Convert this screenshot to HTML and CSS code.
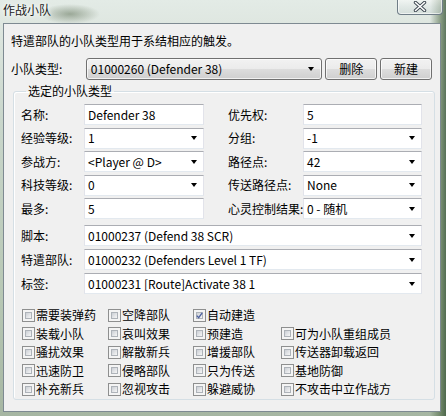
FILE: index.html
```html
<!DOCTYPE html>
<html>
<head>
<meta charset="utf-8">
<link rel="stylesheet" href="styles.css">
</head>
<body>
<div class="window">
  <div class="titlebar">
    <span class="title">作战小队</span>
    <div class="close">
      <svg width="14" height="11" viewBox="0 0 14 11"><path d="M2.5 1.5 L11.5 9.5 M11.5 1.5 L2.5 9.5" stroke="#3d4750" stroke-width="3.4" stroke-linecap="round"/><path d="M2.5 1.5 L11.5 9.5 M11.5 1.5 L2.5 9.5" stroke="#ffffff" stroke-width="1.6" stroke-linecap="round"/></svg>
    </div>
  </div>
  <div class="client">
    <div class="desc">特遣部队的小队类型用于系结相应的触发。</div>
    <div class="toprow">
      <span class="toplbl">小队类型:</span>
      <div class="ddl"><span>01000260 (Defender 38)</span><span class="arrow"></span></div>
      <div class="btn">删除</div>
      <div class="btn">新建</div>
    </div>
    <fieldset class="group">
      <legend>选定的小队类型</legend>
      <div class="fields">
        <span class="lbl">名称:</span>
        <div class="box">Defender 38</div>
        <span class="lbl">优先权:</span>
        <div class="box">5</div>

        <span class="lbl">经验等级:</span>
        <div class="box combo"><span>1</span><span class="arrow"></span></div>
        <span class="lbl">分组:</span>
        <div class="box combo"><span>-1</span><span class="arrow"></span></div>

        <span class="lbl">参战方:</span>
        <div class="box combo"><span>&lt;Player @ D&gt;</span><span class="arrow"></span></div>
        <span class="lbl">路径点:</span>
        <div class="box combo"><span>42</span><span class="arrow"></span></div>

        <span class="lbl">科技等级:</span>
        <div class="box combo"><span>0</span><span class="arrow"></span></div>
        <span class="lbl">传送路径点:</span>
        <div class="box combo"><span>None</span><span class="arrow"></span></div>

        <span class="lbl">最多:</span>
        <div class="box">5</div>
        <span class="lbl">心灵控制结果:</span>
        <div class="box combo"><span>0 - 随机</span><span class="arrow"></span></div>
      </div>
      <div class="wide">
        <span class="lbl">脚本:</span>
        <div class="box combo"><span>01000237 (Defend 38 SCR)</span><span class="arrow"></span></div>
        <span class="lbl">特遣部队:</span>
        <div class="box combo"><span>01000232 (Defenders Level 1 TF)</span><span class="arrow"></span></div>
        <span class="lbl">标签:</span>
        <div class="box combo"><span>01000231 [Route]Activate 38 1</span><span class="arrow"></span></div>
      </div>
      <div class="checks">
        <div class="chk"><span class="cb"></span>需要装弹药</div>
        <div class="chk"><span class="cb"></span>空降部队</div>
        <div class="chk"><span class="cb on"><svg width="9" height="9" viewBox="0 0 9 9"><path d="M1 4.6 L3.4 7.4 L8 1" fill="none" stroke="#4d61a0" stroke-width="1.7"/></svg></span>自动建造</div>
        <div class="chk empty"></div>

        <div class="chk"><span class="cb"></span>装载小队</div>
        <div class="chk"><span class="cb"></span>哀叫效果</div>
        <div class="chk"><span class="cb"></span>预建造</div>
        <div class="chk"><span class="cb"></span>可为小队重组成员</div>

        <div class="chk"><span class="cb"></span>骚扰效果</div>
        <div class="chk"><span class="cb"></span>解散新兵</div>
        <div class="chk"><span class="cb"></span>增援部队</div>
        <div class="chk"><span class="cb"></span>传送器卸载返回</div>

        <div class="chk"><span class="cb"></span>迅速防卫</div>
        <div class="chk"><span class="cb"></span>侵略部队</div>
        <div class="chk"><span class="cb"></span>只为传送</div>
        <div class="chk"><span class="cb"></span>基地防御</div>

        <div class="chk"><span class="cb"></span>补充新兵</div>
        <div class="chk"><span class="cb"></span>忽视攻击</div>
        <div class="chk"><span class="cb"></span>躲避威协</div>
        <div class="chk"><span class="cb"></span>不攻击中立作战方</div>
      </div>
    </fieldset>
  </div>
</div>
</body>
</html>
```

FILE: styles.css
```css
* { box-sizing: border-box; }
html, body { margin: 0; padding: 0; }
body {
  width: 446px;
  height: 416px;
  overflow: hidden;
  font-family: "Noto Sans CJK SC", sans-serif;
  font-size: 12px;
  color: #000;
}
.window {
  width: 446px;
  height: 416px;
  display: flex;
  flex-direction: column;
  background:
    radial-gradient(ellipse 30px 10px at 70px 14px, rgba(70,90,60,0.45), rgba(70,90,60,0) 100%),
    linear-gradient(90deg, rgba(255,255,255,0) 0, rgba(255,255,255,0) 430px, rgba(60,90,50,0.55) 441px, rgba(40,70,40,0.7) 446px),
    linear-gradient(180deg, #e3ebe6 0, #dfe7e1 22px, #c9d6cb 120px, #b7c7b4 300px, #a6b6a2 416px);
}
.titlebar {
  height: 23px;
  display: flex;
  justify-content: space-between;
  align-items: flex-start;
}
.title {
  margin: 2px 0 0 3px;
  line-height: 16px;
  font-size: 12px;
  color: #1b1b1b;
  text-shadow: 0 0 6px #ffffff, 0 0 3px #ffffff;
}
.close {
  width: 46px;
  height: 16px;
  margin-right: 3px;
  margin-top: -1px;
  border: 1px solid #6f7d87;
  border-top: none;
  border-radius: 0 0 4px 4px;
  background: linear-gradient(180deg, rgba(255,255,255,0.55), rgba(225,232,232,0.5) 50%, rgba(200,212,210,0.5));
  box-shadow: inset 0 0 0 1px rgba(255,255,255,0.6);
  display: flex;
  align-items: center;
  justify-content: center;
}
.client {
  margin-left: 3px;
  width: 438px;
  height: 389px;
  border: 1px solid #7e8a92;
  background: #f0f0f0;
  padding: 9px 5px 0 7px;
}
.desc {
  line-height: 16px;
  height: 16px;
}
.toprow {
  margin-top: 9px;
  height: 22px;
  display: flex;
  align-items: center;
  margin-right: 3px;
}
.toplbl {
  width: 75px;
  line-height: 16px;
}
.ddl {
  width: 237px;
  height: 22px;
  border: 1px solid #707070;
  border-radius: 3px;
  background: linear-gradient(180deg, #f2f2f2 0, #ebebeb 50%, #dddddd 50%, #cfcfcf 100%);
  box-shadow: inset 0 0 0 1px rgba(255,255,255,0.7);
  display: flex;
  align-items: center;
  justify-content: space-between;
  padding: 0 7px 0 4px;
  line-height: 16px;
}
.btn {
  margin-left: 3px;
  width: 52px;
  height: 22px;
  border: 1px solid #707070;
  border-radius: 3px;
  background: linear-gradient(180deg, #f2f2f2 0, #ebebeb 50%, #dddddd 50%, #cfcfcf 100%);
  box-shadow: inset 0 0 0 1px rgba(255,255,255,0.7);
  display: flex;
  align-items: center;
  justify-content: center;
  line-height: 16px;
}
.arrow {
  width: 0;
  height: 0;
  border-left: 3.5px solid transparent;
  border-right: 3.5px solid transparent;
  border-top: 4px solid #000;
}
.group {
  margin: 3px 0 0 2px;
  padding: 0 0 4px 7px;
  border: 1px solid #d5dfe5;
  border-radius: 3px;
  box-shadow: inset 1px 1px 0 #fff;
  height: 317px;
}
.group legend {
  margin-left: 5px;
  padding: 0 2px;
  line-height: 16px;
}
.fields {
  margin-top: 5px;
  display: grid;
  grid-template-columns: 63px 132px 87px 119px;
  row-gap: 2.5px;
  grid-auto-rows: 21px;
}
.fields > .lbl:nth-child(4n+3) { margin-left: 12px; }
.fields > .box:nth-child(4n+2) { margin-right: 12px; }
.lbl {
  display: flex;
  align-items: center;
  line-height: 16px;
  white-space: nowrap;
}
.box {
  height: 21px;
  background: #fff;
  border: 1px solid #dbdfe6;
  border-top-color: #abadb3;
  border-left-color: #e2e3ea;
  border-right-color: #e2e3ea;
  border-bottom-color: #e3e9ef;
  display: flex;
  align-items: center;
  padding: 0 6px 0 3px;
  line-height: 16px;
  white-space: nowrap;
}
.combo { justify-content: space-between; }
.wide {
  margin-top: 6px;
  display: grid;
  grid-template-columns: 63px 338px;
  row-gap: 3px;
  grid-auto-rows: 21px;
}
.checks {
  margin-top: 12px;
  margin-left: 1px;
  display: grid;
  grid-template-columns: 86px 85px 88px auto;
  grid-auto-rows: 18.5px;
}
.chk {
  display: flex;
  align-items: center;
  line-height: 16px;
  white-space: nowrap;
}
.cb {
  width: 13px;
  height: 13px;
  margin-right: 1px;
  border: 1px solid #8e8f8f;
  background: #f4f4f4;
  padding: 2px;
  display: flex;
  align-items: center;
  justify-content: center;
  position: relative;
}
.cb::before {
  content: "";
  position: absolute;
  left: 2px; top: 2px; right: 2px; bottom: 2px;
  border: 1px solid #aeb3b9;
  background: linear-gradient(135deg, #cbcfd5 0, #f6f6f6 100%);
}
.cb svg { position: relative; z-index: 1; }
```
